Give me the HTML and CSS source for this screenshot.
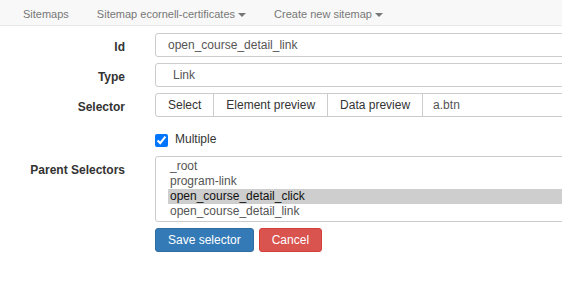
FILE: index.html
```html
<!DOCTYPE html>
<html>
<head>
<meta charset="UTF-8">
<title>Edit selector</title>
<link rel="stylesheet" href="styles.css">
</head>
<body>
<div class="navbar">
    <a class="nav-item">Sitemaps</a>
    <a class="nav-item">Sitemap ecornell-certificates <span class="caret"></span></a>
    <a class="nav-item">Create new sitemap <span class="caret"></span></a>
</div>

<form class="selector-form">
    <div class="form-row">
        <label class="control-label">Id</label>
        <div class="form-control">open_course_detail_link</div>
    </div>
    <div class="form-row">
        <label class="control-label">Type</label>
        <div class="form-control select-like">Link</div>
    </div>
    <div class="form-row">
        <label class="control-label">Selector</label>
        <div class="input-group">
            <span class="btn btn-default">Select</span>
            <span class="btn btn-default">Element preview</span>
            <span class="btn btn-default">Data preview</span>
            <span class="group-input">a.btn</span>
        </div>
    </div>
    <div class="form-row checkbox-row">
        <span></span>
        <label class="checkbox"><input type="checkbox" checked> Multiple</label>
    </div>
    <div class="form-row">
        <label class="control-label">Parent Selectors</label>
        <div class="form-control listbox">
            <div class="option">_root</div>
            <div class="option">program-link</div>
            <div class="option selected">open_course_detail_click</div>
            <div class="option">open_course_detail_link</div>
        </div>
    </div>
    <div class="form-row">
        <span></span>
        <div class="actions">
            <span class="btn btn-primary">Save selector</span>
            <span class="btn btn-danger">Cancel</span>
        </div>
    </div>
</form>
</body>
</html>
```

FILE: styles.css
```css
html{
    background:#fff;
    overflow:hidden;
}
body{
    margin:0;
    font-family:"Liberation Sans", Arial, sans-serif;
    font-size:12px;
    color:#333;
}
.navbar{
    display:flex;
    height:25px;
    align-items:center;
    padding:0 9px;
    background:#f8f8f8;
    border-bottom:1px solid #e7e7e7;
    font-size:11px;
}
.nav-item{
    padding:2px 14px 0;
    color:#777;
    white-space:nowrap;
}
.caret{
    display:inline-block;
    width:0;
    height:0;
    vertical-align:middle;
    border-top:4px solid #777;
    border-left:4px solid transparent;
    border-right:4px solid transparent;
}
.selector-form{
    padding-top:7px;
}
.form-row{
    display:grid;
    grid-template-columns:125px 430px;
    column-gap:30px;
    margin-bottom:6px;
}
.control-label{
    text-align:right;
    font-weight:bold;
    padding-top:6px;
    line-height:17px;
}
.form-control{
    box-sizing:border-box;
    height:24px;
    line-height:22px;
    padding:0 12px;
    border:1px solid #ccc;
    border-radius:3px;
    background:#fff;
    color:#555;
}
.select-like{
    padding-left:17px;
}
.input-group{
    display:flex;
    height:24px;
}
.btn{
    box-sizing:border-box;
    display:inline-block;
    height:24px;
    line-height:22px;
    padding:0 12px;
    border:1px solid #ccc;
    border-radius:3px;
    white-space:nowrap;
}
.btn-default{
    background:#fff;
    color:#333;
    border-radius:0;
    margin-left:-1px;
}
.btn-default:first-child{
    margin-left:0;
    border-radius:3px 0 0 3px;
}
.group-input{
    flex:1;
    box-sizing:border-box;
    line-height:22px;
    padding:0 10px;
    margin-left:-1px;
    border:1px solid #ccc;
    color:#555;
}
.checkbox-row{
    height:27px;
    margin-bottom:6px;
}
.checkbox{
    display:flex;
    align-items:flex-start;
    padding-top:9px;
    line-height:14px;
}
.checkbox input{
    width:13px;
    height:13px;
    margin:2px 7px 0 0;
}
.listbox{
    height:66px;
    padding:2px 0 0 12px;
    line-height:15px;
}
.option{
    padding-left:2px;
    height:15px;
    white-space:nowrap;
}
.option.selected{
    background:#cecece;
    color:#111;
}
.actions{
    display:flex;
    gap:5px;
}
.btn-primary{
    background:#337ab7;
    border-color:#2e6da4;
    color:#fff;
}
.btn-danger{
    background:#d9534f;
    border-color:#d43f3a;
    color:#fff;
}
```
